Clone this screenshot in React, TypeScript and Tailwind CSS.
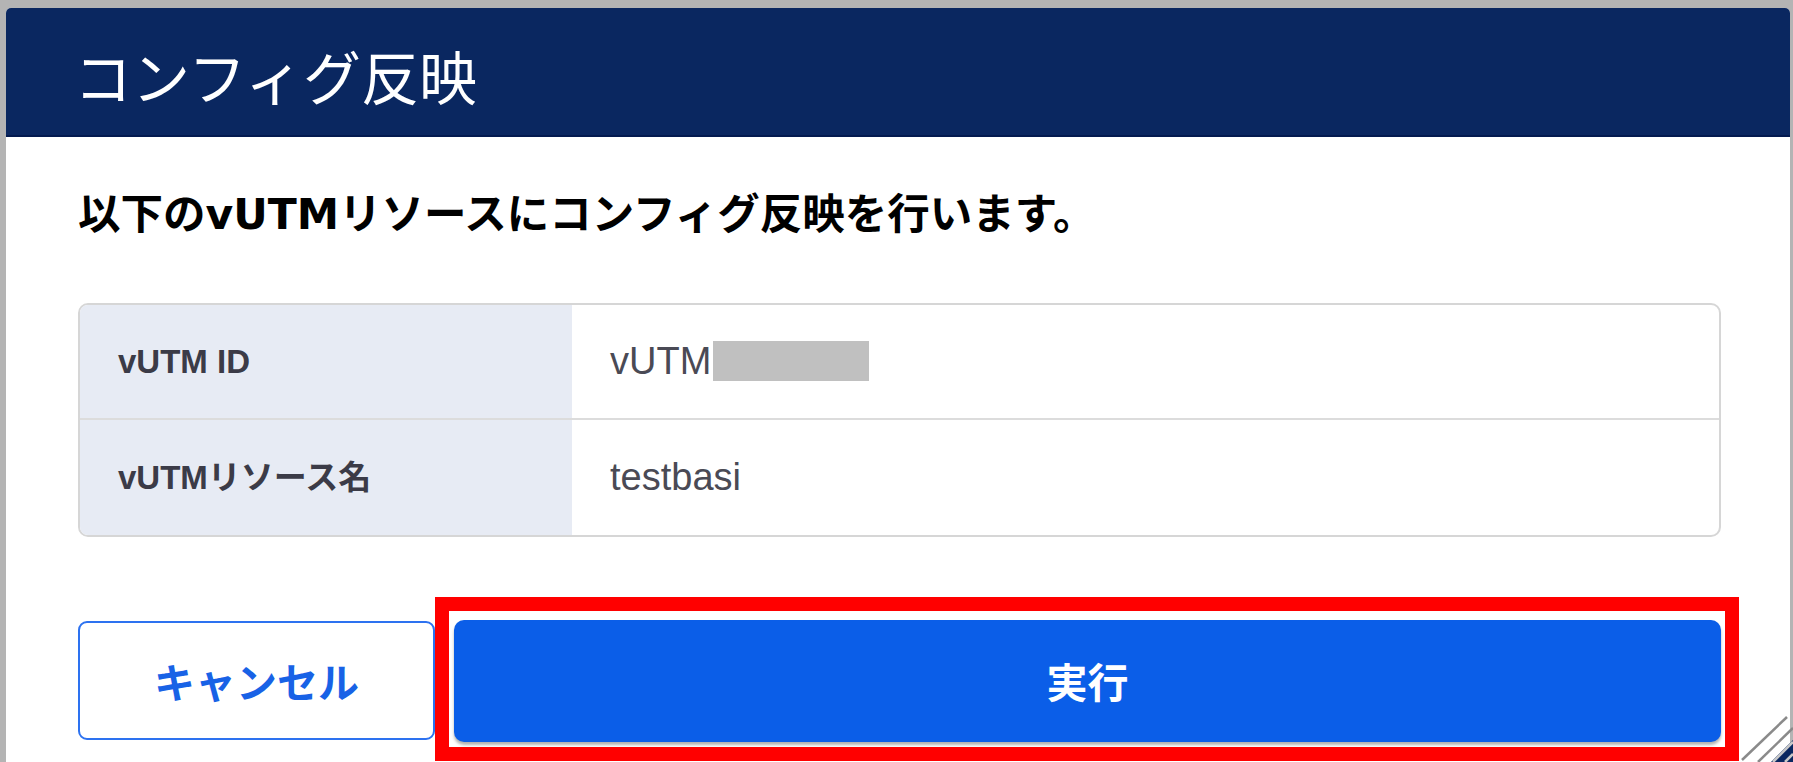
import React from "react";

function ResizeGrip() {
    return <svg className="absolute right-0 bottom-0" width="52" height="48" viewBox="0 0 52 48">
        <path d="M30 48 L52 26 L52 48 Z" fill="#0a2760"/>
        <line x1="1" y1="46" x2="46" y2="3" stroke="#8a8a8a" strokeWidth="2.5"/>
        <line x1="17" y1="48" x2="52" y2="14" stroke="#8a8a8a" strokeWidth="2.5"/>
        <line x1="32" y1="48" x2="52" y2="28" stroke="#c8c8c8" strokeWidth="2.5"/>
        <line x1="44" y1="48" x2="52" y2="40" stroke="#c8c8c8" strokeWidth="2.5"/>
    </svg>
}

function Row({ label, children, last }: { label: string; children: React.ReactNode; last?: boolean }) {
    return <div className={`flex flex-row h-[115px] ${last ? "" : "border-b-2 border-[#dcdcdc]"}`}>
        <div className="w-[492px] bg-[#e7ebf4] flex items-center pl-[38px] font-['Liberation_Sans','Noto_Sans_CJK_JP',sans-serif] font-bold text-[33px] text-[#3b3b47]">
            {label}
        </div>
        <div className="flex-1 flex items-center pl-[38px] font-['Liberation_Sans','Noto_Sans_CJK_JP',sans-serif] text-[38px] text-[#4a4a55]">
            {children}
        </div>
    </div>
}

export default function App() {
    return <div className="relative w-[1793px] h-[762px] bg-[#b4b4b4] pt-[8px] pl-[6px] pr-[3px] overflow-hidden">
        <div className="h-full bg-white rounded-t-[5px] overflow-hidden flex flex-col">
            <div className="h-[129px] shrink-0 bg-[#0a2760] border-b-2 border-[#031a4f] flex items-center pl-[68px] pt-[7px]">
                <h1 className="text-white text-[58px] font-normal leading-none font-['Noto_Sans_CJK_JP',sans-serif]">コンフィグ反映</h1>
            </div>
            <div className="pl-[72px] pr-[69px] pt-[57px]">
                <p className="text-[42.5px] leading-[42px] font-bold text-black font-['DejaVu_Sans','Noto_Sans_CJK_JP',sans-serif]">
                    以下のvUTMリソースにコンフィグ反映を行います。
                </p>
                <div className="mt-[67px] border-2 border-[#d6d6d6] rounded-[10px] overflow-hidden">
                    <Row label="vUTM ID">
                        <span>vUTM</span>
                        <span className="inline-block w-[156px] h-[40px] bg-[#c0c0c0] ml-[2px] -mt-[2px]"></span>
                    </Row>
                    <Row label="vUTMリソース名" last>
                        <span>testbasi</span>
                    </Row>
                </div>
                <div className="mt-[84px] flex flex-row gap-[19px] font-['Noto_Sans_CJK_JP',sans-serif] font-bold text-[41px]">
                    <button className="w-[357px] h-[119px] border-2 border-[#2d72f0] rounded-[9px] text-[#1862e6] bg-white">
                        キャンセル
                    </button>
                    <div className="relative flex-1 -mt-[1px]">
                        <button className="w-full h-[122px] bg-[#0b5ee8] rounded-[10px] text-white shadow-[0_3px_3px_rgba(0,0,0,0.3)]">
                            実行
                        </button>
                        <div className="absolute -top-[23px] -left-[19px] -right-[18px] -bottom-[19px] border-[14px] border-[#ff0000]"></div>
                    </div>
                </div>
            </div>
        </div>
        <ResizeGrip/>
    </div>
}
